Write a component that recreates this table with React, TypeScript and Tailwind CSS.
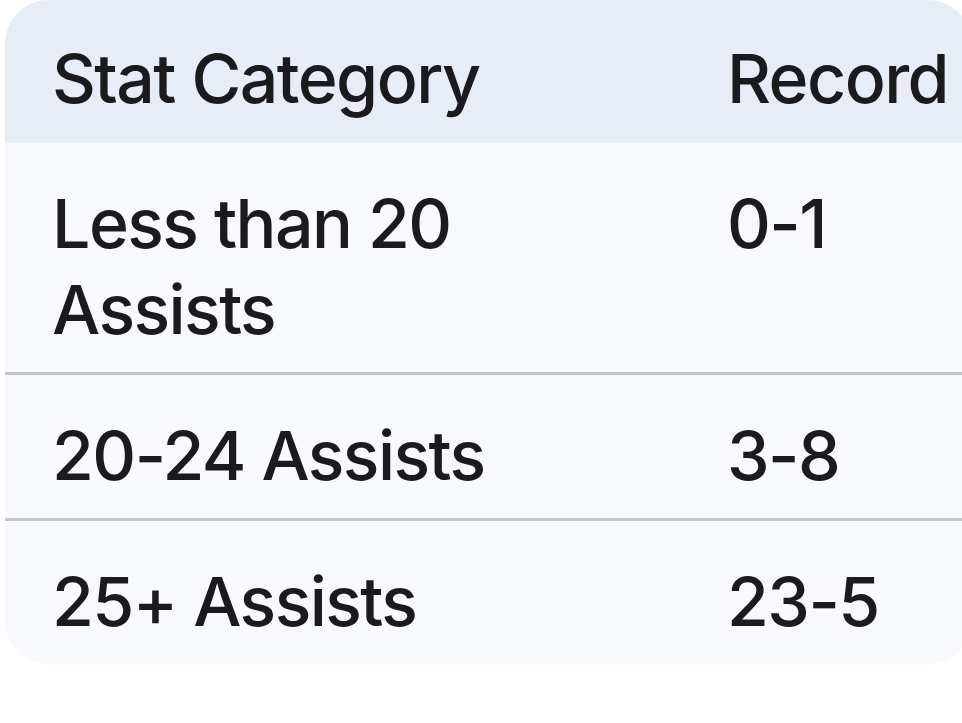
export default function App() {
  const rows = [
    { cat: "Less than 20 Assists", rec: "0-1" },
    { cat: "20-24 Assists", rec: "3-8" },
    { cat: "25+ Assists", rec: "23-5" },
  ];
  return (
    <div className="w-[962px] h-[723px] bg-white overflow-hidden" style={{ fontFamily: "Inter, 'Noto Sans', sans-serif" }}>
      <div className="ml-[5px] w-[967px] rounded-[44px] overflow-hidden bg-[#f7f9fd] text-[#1b1b1d] text-[68px] leading-[86px] font-medium tracking-[-0.023em]">
        <div className="grid grid-cols-[675px_1fr] bg-[#e8ecf5] pt-[35px] pb-[22px]">
          <div className="pl-[47px]">Stat Category</div>
          <div className="pl-[47px]">Record</div>
        </div>
        {rows.map((r, i) => (
          <div
            key={i}
            className={
              "grid grid-cols-[675px_1fr] pt-[37px] pb-[20px] " +
              (i < rows.length - 1 ? "border-b-[3px] border-[#c4c5c8]" : "")
            }
          >
            <div className="pl-[47px] pr-[40px]">{r.cat}</div>
            <div className="pl-[47px]">{r.rec}</div>
          </div>
        ))}
      </div>
    </div>
  );
}
